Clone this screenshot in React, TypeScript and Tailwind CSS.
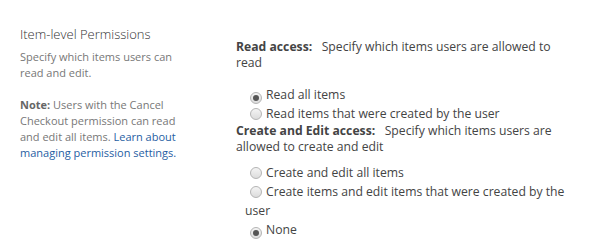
import React from 'react';

function Radio({ checked }: { checked?: boolean }) {
  return (
    <span className="inline-flex items-center justify-center w-[12px] h-[12px] rounded-full border border-[#b4b4b4] bg-gradient-to-b from-[#f4f4f4] to-[#dcdcdc] align-[-2px] ml-[5px] mr-[4px]">
      {checked ? <span className="w-[6px] h-[6px] rounded-full bg-[#555]" /> : null}
    </span>
  );
}

function Option({ label, checked }: { label: string; checked?: boolean }) {
  return (
    <div className="pl-[9px] leading-[19px]">
      <Radio checked={checked} />
      {label}
    </div>
  );
}

export default function App() {
  return (
    <div className="w-[609px] h-[248px] bg-white flex text-[12.2px] text-[#444]" style={{ fontFamily: '"Open Sans", sans-serif' }}>
      <div className="w-[236px] shrink-0 pl-[20px] pt-[24px]">
        <h3 className="text-[13px] font-light leading-[20px] text-[#333]">Item-level Permissions</h3>
        <p className="mt-[5px] text-[11px] text-[#777] leading-[16px] w-[162px]">Specify which items users can read and edit.</p>
        <p className="mt-[16px] text-[11px] text-[#777] leading-[16px] w-[162px]">
          <b className="font-bold text-[#666]">Note:</b> Users with the Cancel Checkout permission can read and edit all items.{' '}
          <a className="text-[#1f5ea3]">Learn about managing permission settings.</a>
        </p>
      </div>
      <div className="flex-1 pt-[39px] pr-[40px]">
        <div className="leading-[16px]">
          <b className="font-bold">Read access:</b>&nbsp;&nbsp; Specify which items users are allowed to read
        </div>
        <div className="mt-[14px]">
          <Option label="Read all items" checked />
          <Option label="Read items that were created by the user" />
        </div>
        <div className="leading-[16px]">
          <b className="font-bold">Create and Edit access:</b>&nbsp;&nbsp; Specify which items users are allowed to create and edit
        </div>
        <div className="mt-[8px]">
          <Option label="Create and edit all items" />
          <Option label="Create items and edit items that were created by the user" />
          <Option label="None" checked />
        </div>
      </div>
    </div>
  );
}
